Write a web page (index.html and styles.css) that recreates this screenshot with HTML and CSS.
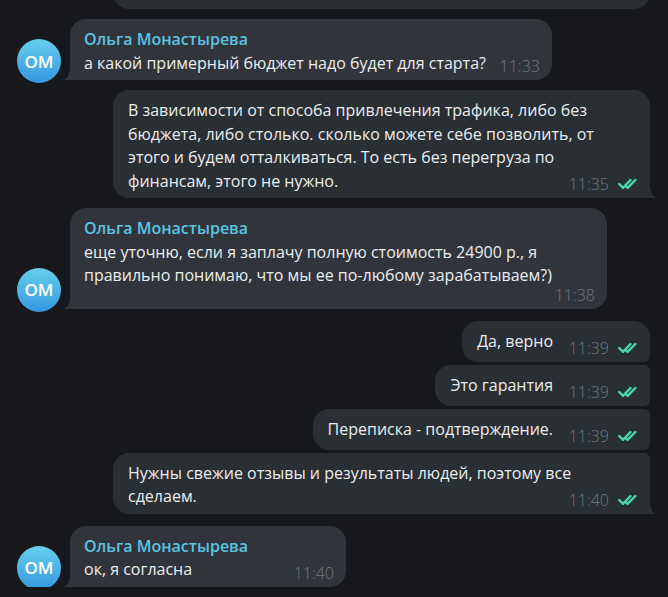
FILE: index.html
```html
<!DOCTYPE html>
<html lang="ru">
<head>
    <meta charset="UTF-8">
    <meta name="viewport" content="width=device-width, initial-scale=1.0">
    <title>Чат</title>
    <link rel="stylesheet" href="styles.css">
</head>
<body>
    <div class="chat">
        <div class="row out"><div class="bubble stub"></div></div>

        <div class="row in gap">
            <div class="avatar">OM</div>
            <div class="bubble tail">
                <div class="name">Ольга Монастырева</div>
                <div class="text">а какой примерный бюджет надо будет для старта?<span class="spacer"></span></div>
                <div class="meta"><span class="time">11:33</span></div>
            </div>
        </div>

        <div class="row out gap">
            <div class="bubble wide tail">
                <div class="text">В зависимости от способа привлечения трафика, либо без<br>бюджета, либо столько. сколько можете себе позволить, от<br>этого и будем отталкиваться. То есть без перегруза по<br>финансам, этого не нужно.<span class="spacer"></span></div>
                <div class="meta"><span class="time">11:35</span><svg class="check" viewBox="0 0 22 12"><path d="M1.2 6 5 9.8 12.5 2M8.8 9 9.6 9.8 17.3 2"/></svg></div>
            </div>
        </div>

        <div class="row in gap">
            <div class="avatar">OM</div>
            <div class="bubble wide tail">
                <div class="name">Ольга Монастырева</div>
                <div class="text">еще уточню, если я заплачу полную стоимость 24900 р., я<br>правильно понимаю, что мы ее по-любому зарабатываем?)<span class="spacer"></span></div>
                <div class="meta"><span class="time">11:38</span></div>
            </div>
        </div>

        <div class="row out gap-lg">
            <div class="bubble first">
                <div class="text">Да, верно<span class="spacer"></span></div>
                <div class="meta"><span class="time">11:39</span><svg class="check" viewBox="0 0 22 12"><path d="M1.2 6 5 9.8 12.5 2M8.8 9 9.6 9.8 17.3 2"/></svg></div>
            </div>
        </div>
        <div class="row out">
            <div class="bubble mid">
                <div class="text">Это гарантия<span class="spacer"></span></div>
                <div class="meta"><span class="time">11:39</span><svg class="check" viewBox="0 0 22 12"><path d="M1.2 6 5 9.8 12.5 2M8.8 9 9.6 9.8 17.3 2"/></svg></div>
            </div>
        </div>
        <div class="row out">
            <div class="bubble mid">
                <div class="text">Переписка - подтверждение.<span class="spacer"></span></div>
                <div class="meta"><span class="time">11:39</span><svg class="check" viewBox="0 0 22 12"><path d="M1.2 6 5 9.8 12.5 2M8.8 9 9.6 9.8 17.3 2"/></svg></div>
            </div>
        </div>
        <div class="row out">
            <div class="bubble wide last tail">
                <div class="text">Нужны свежие отзывы и результаты людей, поэтому все<br>сделаем.<span class="spacer"></span></div>
                <div class="meta"><span class="time">11:40</span><svg class="check" viewBox="0 0 22 12"><path d="M1.2 6 5 9.8 12.5 2M8.8 9 9.6 9.8 17.3 2"/></svg></div>
            </div>
        </div>

        <div class="row in gap-lg">
            <div class="avatar">OM</div>
            <div class="bubble roomy tail">
                <div class="name">Ольга Монастырева</div>
                <div class="text">ок, я согласна<span class="spacer"></span></div>
                <div class="meta"><span class="time">11:40</span></div>
            </div>
        </div>
    </div>
</body>
</html>
```

FILE: styles.css
```css
body { margin: 0; background: #17181b; font-family: "Open Sans", "Noto Sans", sans-serif; color: #ebedef; overflow: hidden; }
.chat { display: flex; flex-direction: column; gap: 3px; }
.row { display: flex; align-items: flex-end; }
.row.gap { margin-top: 7px; }
.row.gap-lg { margin-top: 9px; }
.row.in { padding-left: 17px; }
.row.out { justify-content: flex-end; padding-right: 18px; }

.avatar { width: 44px; height: 44px; border-radius: 50%; margin-right: 9px; margin-bottom: -3px; flex-shrink: 0;
    background: linear-gradient(#66cfee, #3597de); color: #fff; font-size: 17px; font-weight: 600;
    display: flex; align-items: center; justify-content: center; }

.bubble { position: relative; max-width: 537px; min-height: 41px; box-sizing: border-box; padding: 9px 10px 5px 14px;
    border-radius: 16px; font-size: 16px; line-height: 23.5px; }
.in .bubble { background: #31353b; padding-right: 11px; }
.out .bubble { background: #2a2f33; padding-left: 15px; }
.bubble.wide { width: 537px; }
.bubble.roomy { width: 276px; }
.bubble.stub { width: 537px; height: 40px; margin-top: -32px; }

.in .bubble.tail { border-bottom-left-radius: 0; }
.out .bubble.tail { border-bottom-right-radius: 0; }
.bubble.tail::before { content: ""; position: absolute; bottom: 0; width: 7px; height: 12px; }
.in .bubble.tail::before { left: -7px; background: radial-gradient(ellipse 7px 12px at 0 0, transparent 96%, #31353b 100%); }
.out .bubble.tail::before { right: -7px; background: radial-gradient(ellipse 7px 12px at 100% 0, transparent 96%, #2a2f33 100%); }
.bubble.first { border-bottom-right-radius: 6px; }
.bubble.mid { border-top-right-radius: 6px; border-bottom-right-radius: 6px; }
.bubble.last { border-top-right-radius: 6px; }

.name { color: #5bc3e2; font-weight: 600; }
.text { display: flow-root; }
.spacer { float: right; height: 16px; width: 87px; }
.in .spacer { width: 55px; }

.meta { position: absolute; right: 10px; bottom: 5px; display: flex; align-items: center; line-height: 18px; }
.in .meta { right: 12px; }
.time { color: #6d7782; font-size: 16px; font-weight: 300; }
.check { width: 22px; height: 12px; margin-left: 9px; fill: none; stroke: #47d8ac; stroke-width: 2.4; stroke-linecap: round; stroke-linejoin: round; }
```
